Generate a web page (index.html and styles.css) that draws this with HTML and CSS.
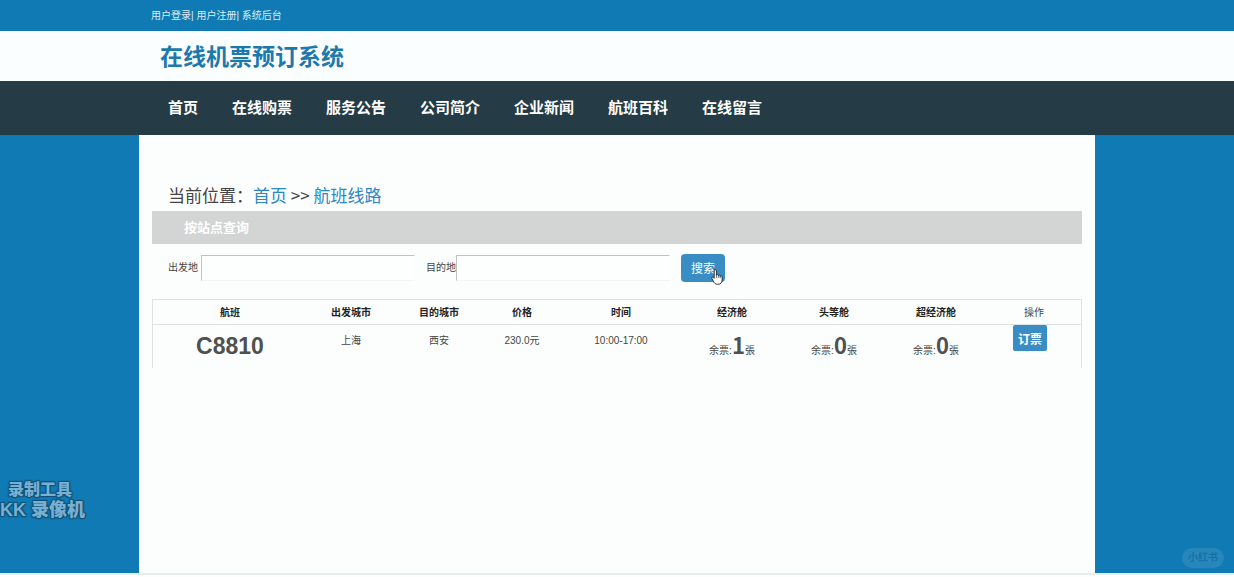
FILE: index.html
```html
<!DOCTYPE html>
<html lang="zh-CN">
<head>
	<title>在线机票预订系统</title>
	<meta charset="utf-8">
	<meta name="viewport" content="width=device-width, initial-scale=1">
	<link rel="stylesheet" href="styles.css">
</head>
<body>
	<div class="topbar">
		<div class="wrap">
			<a href="#">用户登录</a>| <a href="#">用户注册</a>| <a href="#">系统后台</a>
		</div>
	</div>
	<header class="header">
		<div class="wrap">
			<h1 class="title">在线机票预订系统</h1>
		</div>
	</header>
	<nav class="nav">
		<div class="wrap navList">
			<a href="#">首页</a>
			<a href="#">在线购票</a>
			<a href="#">服务公告</a>
			<a href="#">公司简介</a>
			<a href="#">企业新闻</a>
			<a href="#">航班百科</a>
			<a href="#">在线留言</a>
		</div>
	</nav>
	<main class="wrap content">
		<div class="crumb">当前位置：<a href="#">首页</a> &gt;&gt; <a href="#">航班线路</a></div>
		<h2 class="bar">按站点查询</h2>
		<form class="search" onsubmit="return false">
			<label for="from">出发地</label>
			<input class="city" type="text" id="from" name="from">
			<label class="toLabel" for="to">目的地</label>
			<input class="city" type="text" id="to" name="to">
			<button class="btn searchBtn" type="submit">搜索
				<svg class="hand" viewBox="0 0 12 16" width="12" height="16" aria-hidden="true">
					<path d="M3.2 9.2V1.8a1.1 1.1 0 0 1 2.2 0v4.4a1 1 0 0 1 1.9 0v.5a1 1 0 0 1 1.9.1v.6a1 1 0 0 1 1.9.3v3c0 2.6-1.2 4.6-4.3 4.6-2.4 0-3.4-1-4.4-3L.8 9.3c-.4-.9.8-1.5 1.4-.8z" fill="#fff" stroke="#222" stroke-width="0.9" stroke-linejoin="round"/>
					<path d="M5.4 6.2v2.6M7.3 6.7v2.2M9.2 7.4v1.7" fill="none" stroke="#222" stroke-width="0.7"/>
				</svg>
			</button>
		</form>
		<table class="flights">
			<colgroup>
				<col class="colNo">
				<col class="colCity">
				<col class="colCity">
				<col class="colPrice">
				<col class="colTime">
				<col class="colSeat">
				<col class="colSeat">
				<col class="colSeat">
				<col class="colAct">
			</colgroup>
			<thead>
				<tr>
					<th>航班</th>
					<th>出发城市</th>
					<th>目的城市</th>
					<th>价格</th>
					<th>时间</th>
					<th>经济舱</th>
					<th>头等舱</th>
					<th>超经济舱</th>
					<th class="plain">操作</th>
				</tr>
			</thead>
			<tbody>
				<tr>
					<td class="no">C8810</td>
					<td>上海</td>
					<td>西安</td>
					<td>230.0元</td>
					<td>10:00-17:00</td>
					<td class="seat">余票:<b>1</b>張</td>
					<td class="seat">余票:<b>0</b>張</td>
					<td class="seat">余票:<b>0</b>張</td>
					<td class="act"><button class="btn book" type="button">订票</button></td>
				</tr>
			</tbody>
		</table>
	</main>
	<footer class="footer"></footer>

	<div class="recorder">
		<div class="tool">录制工具</div>
		<div class="brand">KK 录像机</div>
	</div>
	<div class="badge">小红书</div>
</body>
</html>
```
FILE: styles.css
```css
* {
	box-sizing: border-box;
}
body {
	margin: 0;
	min-height: 100vh;
	display: flex;
	flex-direction: column;
	position: relative;
	overflow-x: hidden;
	background-color: #0f7ab3;
	color: #444;
	font-family: "Liberation Sans", "Noto Sans CJK SC", sans-serif;
	font-size: 10px;
	line-height: 16px;
}
a {
	color: #2b88c4;
	text-decoration: none;
}
.wrap {
	width: 100%;
	max-width: 956px;
	margin: 0 auto;
	padding: 0 12px;
}
.topbar {
	padding: 8px 0 7px;
	color: #d9ecf6;
}
.topbar a {
	color: #d9ecf6;
}
.header {
	background-color: #fbfefe;
}
.title {
	margin: 0;
	padding: 2px 9px 0;
	font-size: 23px;
	line-height: 48px;
	color: #1c79ae;
}
.nav {
	background-color: #253b45;
}
.navList {
	display: flex;
	flex-wrap: wrap;
}
.nav a {
	padding: 0 17px;
	font-size: 15px;
	font-weight: bold;
	line-height: 54px;
	color: #fff;
}
.content {
	flex: 1;
	padding: 48px 13px 0;
	background-color: #fcfefd;
}
.crumb {
	padding: 0 16px 4px;
	font-family: "Noto Sans CJK SC", sans-serif;
	font-size: 17px;
	line-height: 24px;
}
.bar {
	margin: 0;
	padding: 0 32px;
	font-size: 13px;
	line-height: 33px;
	color: #fff;
	background-color: #d3d4d4;
}
.search {
	display: flex;
	align-items: center;
	padding: 10px 16px 17px;
}
.city {
	width: 214px;
	height: 26px;
	margin-left: 3px;
	border: 1px solid;
	border-color: #bfc3c3 #fcfefd #f3f5f5 #bfc3c3;
	background-color: #fdfefe;
	font-size: 12px;
}
.toLabel {
	margin-left: 11px;
}
.toLabel + .city {
	margin-left: 0;
}
.btn {
	border: 0;
	background-color: #3a8cc5;
	color: #fff;
	font-family: inherit;
}
.searchBtn {
	position: relative;
	height: 28px;
	margin-left: 11px;
	padding: 0 10px 2px;
	border-radius: 4px;
	font-size: 12px;
}
.hand {
	position: absolute;
	right: 2px;
	top: 15px;
}
.flights {
	width: 100%;
	table-layout: fixed;
	border-collapse: separate;
	border-spacing: 0;
	border: 1px solid #dfe2e2;
	border-bottom: 0;
	text-align: center;
}
.flights th {
	height: 25px;
	padding: 1px 0 0;
	border-bottom: 1px solid #dfe2e2;
	color: #222;
}
.flights .plain {
	font-weight: normal;
	color: #444;
}
.flights td {
	height: 43px;
	padding: 8px 0 0;
	vertical-align: top;
}
.colNo {
	width: 154px;
}
.colCity {
	width: 88px;
}
.colPrice {
	width: 78px;
}
.colTime {
	width: 120px;
}
.colSeat {
	width: 102px;
}
.colAct {
	width: 94px;
}
.flights .no {
	font-size: 23px;
	font-weight: bold;
	line-height: 26px;
	color: #505050;
}
.flights .seat {
	line-height: 22px;
}
.seat b {
	font-family: "Noto Sans CJK SC", sans-serif;
	font-size: 22px;
	color: #505050;
}
.flights .act {
	padding: 0 8px 0 0;
}
.book {
	width: 34px;
	height: 26px;
	padding: 0;
	border-radius: 2px;
	font-size: 12px;
	font-weight: bold;
}
.footer {
	height: 4px;
	border-top: 2px solid #e6eeee;
	background-color: #fcfefe;
}
/* watermarks over the page */
.recorder {
	position: absolute;
	left: 0;
	bottom: 56px;
	font-weight: 900;
	line-height: 21px;
	color: #77b0d2;
	text-shadow: 1px 1px 1px #134f74, -1px -1px 1px #134f74, 1px -1px 1px #134f74, -1px 1px 1px #134f74;
}
.tool {
	padding-left: 8px;
	font-size: 16px;
}
.brand {
	font-size: 18px;
}
.badge {
	position: absolute;
	right: 10px;
	bottom: 9px;
	padding: 0 6px;
	border-radius: 10px;
	background-color: #2887ba;
	color: #1672a6;
	font-weight: bold;
	line-height: 20px;
}
```
